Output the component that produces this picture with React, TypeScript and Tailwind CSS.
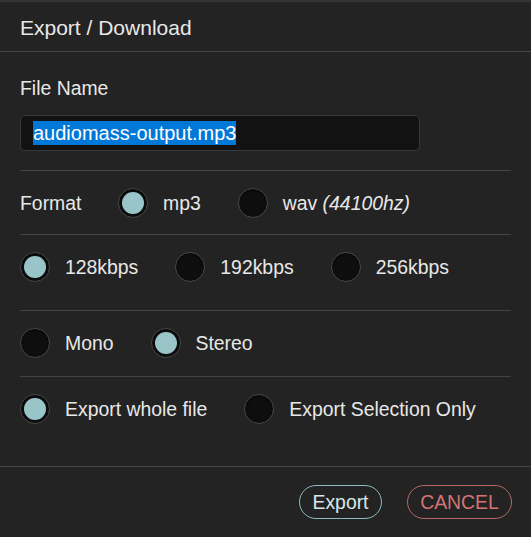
const Radio = ({ checked }: { checked?: boolean }) => (
  <span className="flex h-[30px] w-[30px] shrink-0 items-center justify-center rounded-full border border-[#484848] bg-[#0e0e0e] shadow-[inset_0_1px_2px_rgba(0,0,0,0.8)]">
    {checked && <span className="h-[22px] w-[22px] rounded-full bg-[#99c4c8]" />}
  </span>
);

const Option = ({
  label,
  checked,
  className = "",
}: {
  label: React.ReactNode;
  checked?: boolean;
  className?: string;
}) => (
  <label className={`flex items-center ${className}`}>
    <Radio checked={checked} />
    <span className="ml-[15px] mr-[37px] whitespace-nowrap">{label}</span>
  </label>
);

export default function App() {
  return (
    <div className="h-[537px] w-[531px] overflow-hidden border-t-2 border-[#323237] bg-[#232323] font-['Liberation_Sans',Arial,sans-serif] text-[19.4px] leading-[22px] text-[#e8e8e8]">
      <header className="flex h-[50px] items-center border-b border-[#444] px-5 pt-[2px] text-[21px]">
        Export / Download
      </header>

      <div className="px-5">
        <section className="border-b border-[#444] pb-[19px] pt-[25px]">
          <div>File Name</div>
          <div className="mt-[16px] flex h-[36px] w-[400px] items-center rounded-[5px] border border-[#383838] bg-[#121212] px-[12px]">
            <span className="bg-[#0078d7] text-[20px] leading-[24px] text-white">audiomass-output.mp3</span>
          </div>
        </section>

        <section className="flex items-center border-b border-[#444] pb-[16px] pt-[17px]">
          <span className="w-[98px]">Format</span>
          <Option label="mp3" checked />
          <Option
            label={
              <>
                wav <i>(44100hz)</i>
              </>
            }
          />
        </section>

        <section className="flex items-center border-b border-[#444] pb-[28px] pt-[17px]">
          <Option label="128kbps" checked />
          <Option label="192kbps" />
          <Option label="256kbps" />
        </section>

        <section className="flex items-center border-b border-[#444] pb-[18px] pt-[17px]">
          <Option label="Mono" />
          <Option label="Stereo" checked />
        </section>

        <section className="flex items-center pb-[42px] pt-[17px]">
          <Option label="Export whole file" checked />
          <Option label="Export Selection Only" />
        </section>
      </div>

      <footer className="flex justify-end gap-[25px] border-t border-[#444] px-[19px] pt-[18px]">
        <button className="flex h-[34px] w-[83px] items-center justify-center rounded-full border border-[#8dbcbf] text-[#d6e8e9]">
          Export
        </button>
        <button className="flex h-[34px] w-[105px] items-center justify-center rounded-full border border-[#b96666] text-[#d47474]">
          CANCEL
        </button>
      </footer>
    </div>
  );
}
